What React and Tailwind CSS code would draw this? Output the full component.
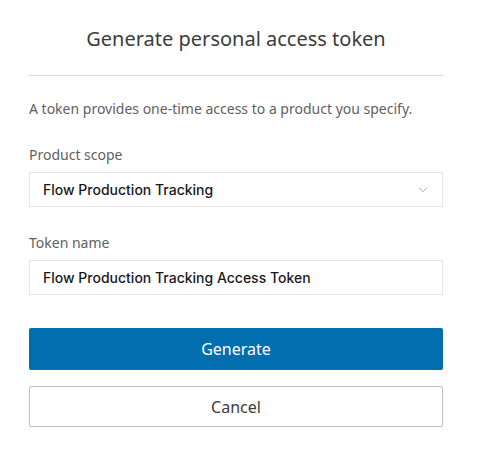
import { ChevronDown } from 'lucide-react'

export default function App() {
  return (
    <div className="min-h-screen bg-white pl-[29px] pr-[34px] font-['Noto_Sans',sans-serif] text-[#3c3c3c]">
      <h1 className="pt-[24px] pb-[21px] text-center text-[20px] leading-[30px] text-[#3c3c3c]">
        Generate personal access token
      </h1>
      <div className="h-px w-full bg-[#d9d9d9]" />

      <p className="mt-[23px] text-[14px] leading-[20px] text-[#5f5f5f]">
        A token provides one-time access to a product you specify.
      </p>

      <label className="mt-[26px] block text-[14px] leading-[20px] text-[#5f5f5f]">Product scope</label>
      <div className="mt-[7px] flex h-[35px] items-center justify-between border border-[#e5e5e5] pl-[13px] pr-[12px]">
        <span className="font-['Inter',sans-serif] text-[14px] font-medium text-[#1a1a1a]">
          Flow Production Tracking
        </span>
        <ChevronDown className="h-[14px] w-[14px] text-[#9a9a9a]" strokeWidth={1.5} />
      </div>

      <label className="mt-[26px] block text-[14px] leading-[20px] text-[#5f5f5f]">Token name</label>
      <div className="mt-[7px] flex h-[35px] items-center border border-[#e5e5e5] pl-[13px]">
        <span className="font-['Inter',sans-serif] text-[14px] font-medium text-[#1a1a1a]">
          Flow Production Tracking Access Token
        </span>
      </div>

      <div className="mt-[33px] flex flex-col gap-[16px]">
        <button className="h-[42px] w-full rounded-[2px] bg-[#006eaf] text-[16px] text-white">
          Generate
        </button>
        <button className="h-[41px] w-full rounded-[2px] border border-[#bfbfbf] bg-white text-[16px] text-[#3c3c3c]">
          Cancel
        </button>
      </div>
    </div>
  )
}
